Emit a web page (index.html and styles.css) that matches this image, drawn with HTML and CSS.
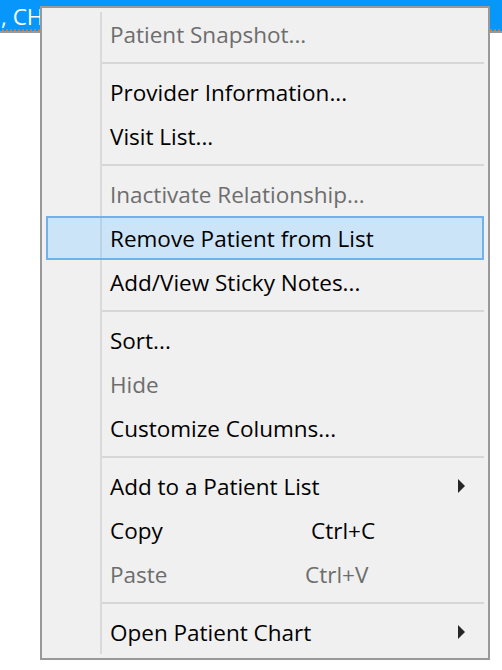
FILE: index.html
```html
<!DOCTYPE html>
<html lang="en">

<head>
    <meta charset="UTF-8">
    <meta name="viewport" content="width=device-width, initial-scale=1.0">
    <title>Patient List Menu</title>
    <link rel="stylesheet" href="styles.css">
</head>

<body>
    <div class="list-row">
        <span class="list-row-text">, CHARLES</span>
    </div>

    <ul class="menu" id="context-menu">
        <li class="menu-item disabled">Patient Snapshot...</li>
        <li class="menu-sep"></li>
        <li class="menu-item">Provider Information...</li>
        <li class="menu-item">Visit List...</li>
        <li class="menu-sep"></li>
        <li class="menu-item disabled">Inactivate Relationship...</li>
        <li class="menu-item hot">Remove Patient from List</li>
        <li class="menu-item">Add/View Sticky Notes...</li>
        <li class="menu-sep"></li>
        <li class="menu-item">Sort...</li>
        <li class="menu-item disabled">Hide</li>
        <li class="menu-item">Customize Columns...</li>
        <li class="menu-sep"></li>
        <li class="menu-item">
            <span class="label">Add to a Patient List</span>
            <svg class="submenu-arrow" width="8" height="14" viewBox="0 0 8 14">
                <polygon points="0,0 7,7 0,14" fill="#262626" />
            </svg>
        </li>
        <li class="menu-item">
            <span class="label">Copy</span>
            <span class="shortcut shortcut-copy">Ctrl+C</span>
        </li>
        <li class="menu-item disabled">
            <span class="label">Paste</span>
            <span class="shortcut">Ctrl+V</span>
        </li>
        <li class="menu-sep"></li>
        <li class="menu-item">
            <span class="label">Open Patient Chart</span>
            <svg class="submenu-arrow" width="8" height="14" viewBox="0 0 8 14">
                <polygon points="0,0 7,7 0,14" fill="#262626" />
            </svg>
        </li>
    </ul>
</body>

</html>
```

FILE: styles.css
```css
body {
    margin: 0;
    background-color: #fff;
    font-family: "Open Sans", "Noto Sans", sans-serif;
    position: relative;
    height: 670px;
    overflow: hidden;
}

.list-row {
    height: 29px;
    background-color: #0797fb;
    border-bottom: 2px solid transparent;
    border-image: repeating-linear-gradient(to right, #e8731c 0 2px, #0797fb 2px 4px) 2;
    box-shadow: 0 2px 0 #999;
    padding-left: 1px;
    overflow: hidden;
    white-space: nowrap;
}

.list-row-text {
    color: #fff;
    font-size: 22.5px;
    line-height: 33px;
}

.menu {
    position: absolute;
    left: 40px;
    top: 6px;
    width: 438px;
    margin: 0;
    padding: 4px;
    list-style: none;
    border: 2px solid #999;
    background: linear-gradient(to right, transparent 54px, #dadada 54px, #dadada 56px, transparent 56px) content-box, #f0f0f0;
    font-size: 22.5px;
    color: #000;
}

.menu-item {
    height: 44px;
    box-sizing: border-box;
    display: flex;
    align-items: center;
    padding: 0 18px 0 64px;
    white-space: nowrap;
}

.menu-item.disabled {
    color: #6d6d6d;
}

.menu-item.hot {
    background: linear-gradient(to right, transparent 52px, rgba(0, 0, 0, 0.08) 52px, rgba(0, 0, 0, 0.08) 54px, transparent 54px), #cce4f7;
    border: 2px solid #70b0ee;
    padding-left: 62px;
}

.menu-item .label {
    width: 195px;
}

.shortcut-copy {
    margin-left: 6px;
}

.submenu-arrow {
    margin-left: auto;
}

.menu-sep {
    height: 14px;
    box-sizing: border-box;
    padding-top: 6px;
    margin-left: 56px;
}

.menu-sep::before {
    content: "";
    display: block;
    height: 2px;
    background-color: #d7d7d7;
}
```
